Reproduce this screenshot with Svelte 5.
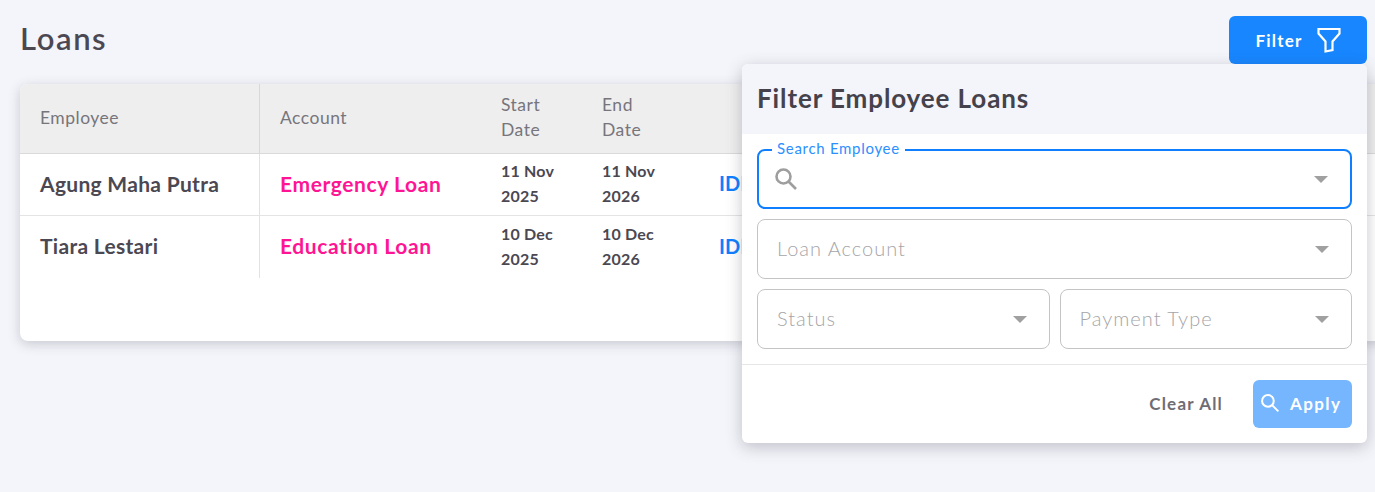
<script>
	const rows = [
		{ name: 'Agung Maha Putra', account: 'Emergency Loan', start: ['11 Nov', '2025'], end: ['11 Nov', '2026'], amount: 'IDR' },
		{ name: 'Tiara Lestari', account: 'Education Loan', start: ['10 Dec', '2025'], end: ['10 Dec', '2026'], amount: 'IDR' }
	];
</script>

<div class="page">
	<header class="top">
		<h1>Loans</h1>
		<button class="filter-btn">
			Filter
			<svg width="24" height="26" viewBox="0 0 24 26" fill="none" stroke="#fff" stroke-width="2.200" stroke-linejoin="miter">
				<path d="M1.500 2h21v4.500l-7 8v8.500l-7 1.500v-10l-7-8z" />
			</svg>
		</button>
	</header>

	<div class="card">
		<div class="row head">
			<div class="cell c-emp">Employee</div>
			<div class="cell c-acc">Account</div>
			<div class="cell c-date">Start<br />Date</div>
			<div class="cell c-date">End<br />Date</div>
		</div>
		{#each rows as r}
			<div class="row body">
				<div class="cell c-emp name">{r.name}</div>
				<div class="cell c-acc account">{r.account}</div>
				<div class="cell c-date date">{r.start[0]}<br />{r.start[1]}</div>
				<div class="cell c-date date">{r.end[0]}<br />{r.end[1]}</div>
				<div class="cell amount">{r.amount}</div>
			</div>
		{/each}
	</div>

	<div class="panel">
		<h2>Filter Employee Loans</h2>
		<div class="fields">
			<div class="field focused">
				<span class="legend">Search Employee</span>
				<svg class="lens" width="24" height="24" viewBox="0 0 24 24" fill="none" stroke="#9e9e9e" stroke-width="2.600">
					<circle cx="9.500" cy="9.500" r="7" />
					<path d="M14.500 14.500l7.500 7.500" />
				</svg>
				<span class="caret"></span>
			</div>
			<div class="field">
				<span class="ph">Loan Account</span>
				<span class="caret"></span>
			</div>
			<div class="pair">
				<div class="field">
					<span class="ph">Status</span>
					<span class="caret"></span>
				</div>
				<div class="field">
					<span class="ph">Payment Type</span>
					<span class="caret"></span>
				</div>
			</div>
		</div>
		<div class="actions">
			<button class="clear">Clear All</button>
			<button class="apply">
				<svg width="20" height="20" viewBox="0 0 24 24" fill="none" stroke="#fff" stroke-width="2.400">
					<circle cx="9.500" cy="9.500" r="7" />
					<path d="M14.500 14.500l7.500 7.500" />
				</svg>
				Apply
			</button>
		</div>
	</div>
</div>

<style>
	:global(body) {
		background: #f4f5fa;
		font-family: Lato, "Open Sans", sans-serif;
	}
	.page {
		position: relative;
		height: 492px;
		padding: 16px 20px 0;
		box-sizing: border-box;
		overflow: hidden;
		color: #4b4852;
	}
	.top {
		display: flex;
		justify-content: space-between;
		align-items: center;
		margin-right: -12px;
		height: 48px;
	}
	h1 {
		margin: 0 0 4px;
		font-size: 31px;
		font-weight: 600;
		letter-spacing: 1.600px;
	}
	.filter-btn {
		display: flex;
		align-items: center;
		justify-content: center;
		gap: 14px;
		width: 138px;
		height: 48px;
		border: 0;
		border-radius: 6px;
		background: #1786ff;
		color: #fff;
		font: 700 17px Lato, sans-serif;
		letter-spacing: 1.200px;
	}
	.card {
		margin-top: 19px;
		height: 257px;
		margin-right: -40px;
		background: #fff;
		border-radius: 8px;
		overflow: hidden;
		box-shadow: 0 3px 12px rgba(70, 70, 90, 0.25);
		position: relative;
		top: 1px;
	}
	.row {
		display: flex;
		border-bottom: 1px solid #e4e4e4;
		box-sizing: border-box;
	}
	.head {
		height: 70px;
		background: #eeeeee;
		border-bottom-color: #dadada;
		color: #77757c;
		font-size: 17.500px;
		line-height: 25px;
		letter-spacing: 0.500px;
	}
	.body {
		height: 62px;
	}
	.body:last-child {
		border-bottom: 0;
	}
	.cell {
		display: flex;
		flex-direction: column;
		justify-content: center;
		box-sizing: border-box;
		padding: 0 0 3px 20px;
	}
	.c-emp {
		width: 240px;
		border-right: 1px solid #e2e2e2;
	}
	.head .c-emp {
		border-right-color: #d8d8d8;
	}
	.c-acc {
		width: 221px;
	}
	.c-date {
		width: 101px;
		display: block;
		align-self: center;
	}
	.name {
		font-size: 21px;
		font-weight: 700;
		letter-spacing: 0.300px;
	}
	.account {
		font-size: 21px;
		font-weight: 700;
		color: #ff1493;
		letter-spacing: 0.600px;
	}
	.date {
		font-size: 16px;
		font-weight: 700;
		line-height: 25px;
		letter-spacing: 0.200px;
	}
	.amount {
		padding-left: 36px;
		font-size: 20px;
		font-weight: 700;
		color: #0f7fff;
	}
	.panel {
		position: absolute;
		left: 742px;
		top: 64px;
		width: 625px;
		height: 379px;
		background: #fff;
		border-radius: 6px;
		overflow: hidden;
		box-shadow: 0 4px 16px rgba(70, 70, 90, 0.3);
	}
	h2 {
		margin: 0;
		height: 70px;
		padding-left: 15px;
		line-height: 69px;
		background: #f4f5fa;
		font-size: 26px;
		font-weight: 700;
		letter-spacing: 0.900px;
		color: #45424c;
	}
	.fields {
		display: flex;
		flex-direction: column;
		gap: 10px;
		padding: 15px;
		border-bottom: 1px solid #e6e6e6;
	}
	.field {
		position: relative;
		display: flex;
		align-items: center;
		height: 60px;
		box-sizing: border-box;
		padding: 0 0 2px 19px;
		border: 1px solid #c4c4c4;
		border-radius: 8px;
	}
	.focused {
		border: 2px solid #0f7fff;
		padding: 0 0 0 15px;
	}
	.legend {
		position: absolute;
		left: 13px;
		top: -12px;
		padding: 0 5px;
		background: #fff;
		color: #2b8fff;
		font-size: 15px;
		line-height: 18px;
		letter-spacing: 0.700px;
	}
	.ph {
		color: #a5a5a8;
		font-size: 20px;
		font-weight: 300;
		letter-spacing: 1px;
	}
	.caret {
		position: absolute;
		right: 22px;
		top: 50%;
		margin-top: -3px;
		border-left: 7px solid transparent;
		border-right: 7px solid transparent;
		border-top: 7px solid #a0a0a0;
	}
	.pair {
		display: grid;
		grid-template-columns: 1fr 1fr;
		gap: 10px;
	}
	.actions {
		display: flex;
		justify-content: flex-end;
		align-items: center;
		gap: 30px;
		padding: 15px;
	}
	.clear {
		border: 0;
		padding: 0 0 2px;
		background: none;
		color: #6f6d74;
		font: 700 17px Lato, sans-serif;
		letter-spacing: 1.200px;
	}
	.apply {
		display: flex;
		align-items: center;
		gap: 10px;
		width: 99px;
		height: 48px;
		padding: 0 7px 2px;
		border: 0;
		border-radius: 6px;
		background: #75b6ff;
		color: #fff;
		font: 700 17px Lato, sans-serif;
		letter-spacing: 1.400px;
	}
</style>
